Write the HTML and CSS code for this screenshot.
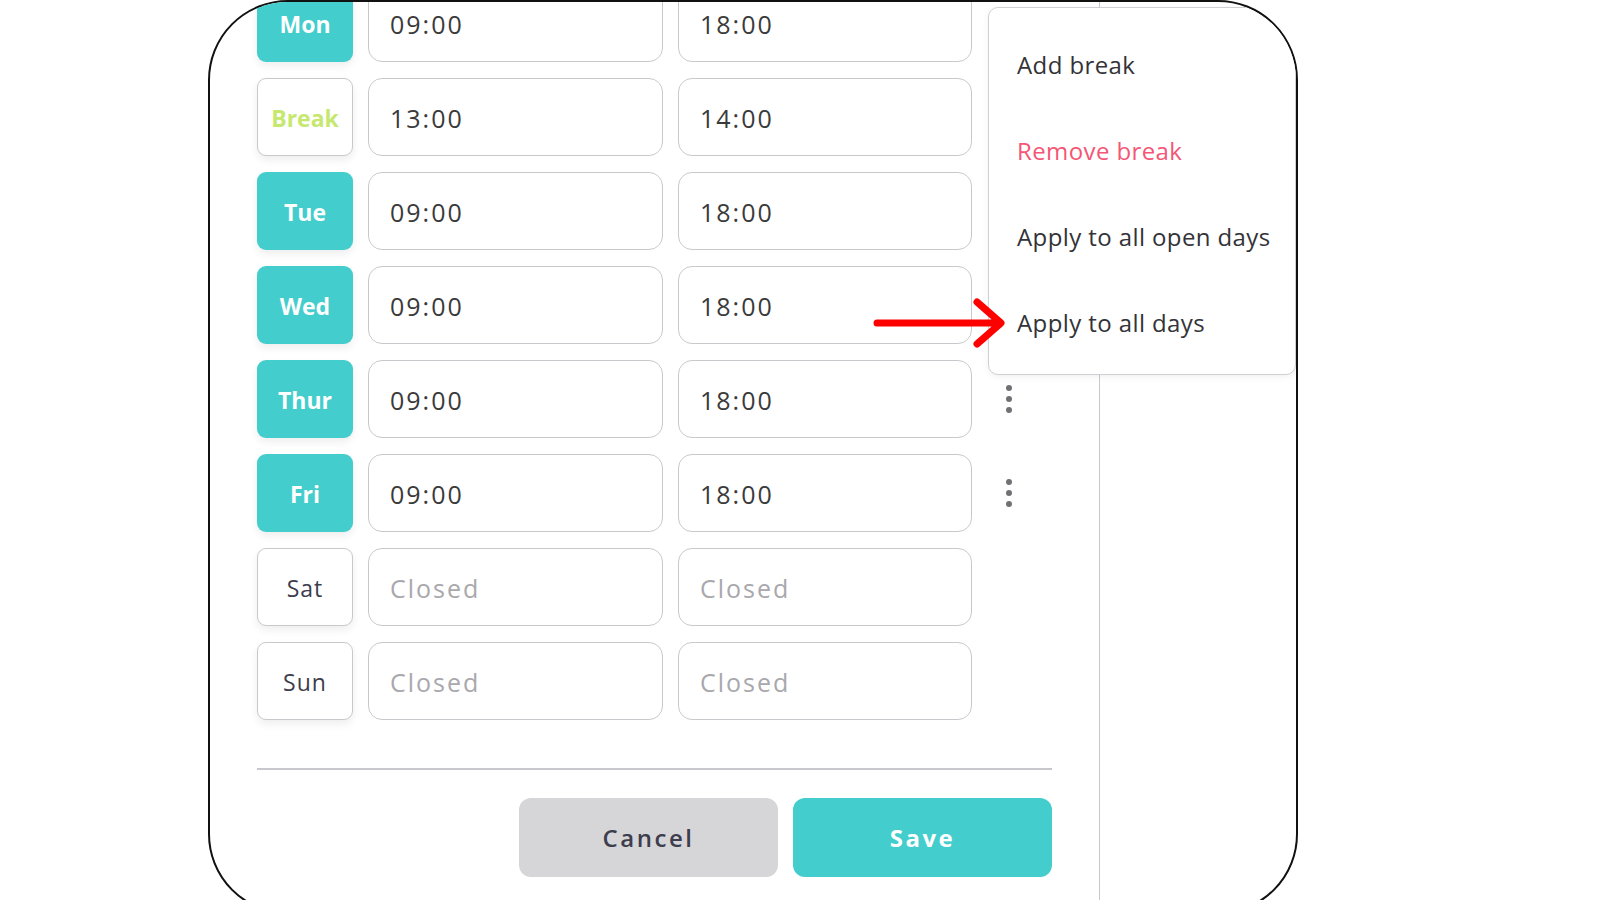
FILE: index.html
```html
<!DOCTYPE html>
<html lang="en">
<head>
<meta charset="utf-8">
<title>Opening hours</title>
<link rel="stylesheet" href="styles.css">
</head>
<body>
<div class="frame">
  <div class="main">
    <div class="rows">
      <div class="row"><div class="day open">Mon</div><div class="field">09:00</div><div class="field">18:00</div><div class="more"></div></div>
      <div class="row"><div class="day brk">Break</div><div class="field">13:00</div><div class="field">14:00</div><div class="more"></div></div>
      <div class="row"><div class="day open">Tue</div><div class="field">09:00</div><div class="field">18:00</div><div class="more"></div></div>
      <div class="row"><div class="day open">Wed</div><div class="field">09:00</div><div class="field">18:00</div><div class="more"></div></div>
      <div class="row"><div class="day open">Thur</div><div class="field">09:00</div><div class="field">18:00</div><div class="more"><span class="dots"><i></i><i></i><i></i></span></div></div>
      <div class="row"><div class="day open">Fri</div><div class="field">09:00</div><div class="field">18:00</div><div class="more"><span class="dots"><i></i><i></i><i></i></span></div></div>
      <div class="row"><div class="day closed">Sat</div><div class="field ph">Closed</div><div class="field ph">Closed</div><div class="more"></div></div>
      <div class="row"><div class="day closed">Sun</div><div class="field ph">Closed</div><div class="field ph">Closed</div><div class="more"></div></div>
    </div>
    <div class="divider"></div>
    <div class="actions">
      <button class="btn cancel">Cancel</button>
      <button class="btn save">Save</button>
    </div>
  </div>
  <div class="side"></div>
  <div class="menu">
    <div class="item">Add break</div>
    <div class="item danger">Remove break</div>
    <div class="item">Apply to all open days</div>
    <div class="item">Apply to all days</div>
  </div>
  <svg class="arrow" width="140" height="60" viewBox="0 0 140 60">
    <path d="M7 28 H129 M107 7 L131 28 L107 49" fill="none" stroke="#ff0000" stroke-width="7" stroke-linecap="round" stroke-linejoin="round"/>
  </svg>
</div>
</body>
</html>
```
FILE: styles.css
```css
* { box-sizing: border-box; }
html, body { margin: 0; padding: 0; background: #ffffff; }
body {
  font-family: "Open Sans", "Noto Sans", "Liberation Sans", sans-serif;
  color: #3a3a3f;
  width: 1600px;
  height: 900px;
  overflow: hidden;
}
.frame {
  position: relative;
  margin-left: 208px;
  width: 1090px;
  height: 914px;
  border: 2px solid #111;
  border-radius: 80px;
  overflow: hidden;
  display: flex;
  background: #fff;
}
.main {
  width: 889px;
  flex: none;
  padding: 0 47px;
}
.side {
  flex: 1;
  border-left: 1px solid #c9c9cd;
}
.rows {
  margin-top: -18px;
  display: flex;
  flex-direction: column;
  gap: 16px;
}
.row {
  display: grid;
  grid-template-columns: 96px 295px 294px 40px;
  column-gap: 15px;
  height: 78px;
}
.day {
  border-radius: 9px;
  display: flex;
  align-items: center;
  justify-content: center;
  font-size: 23px;
  padding-top: 2px;
  box-shadow: 0 4px 8px rgba(0,0,0,0.07);
}
.day.open {
  background: #43cdcc;
  color: #fff;
  font-weight: 700;
}
.day.brk {
  background: #fff;
  border: 1.5px solid #c9c9cd;
  color: #c6e86e;
  font-weight: 700;
}
.day.closed {
  background: #fff;
  border: 1.5px solid #c9c9cd;
  color: #3d3d4d;
  font-weight: 500;
  letter-spacing: 1px;
}
.field {
  border: 1.5px solid #c9c9cd;
  border-radius: 14px;
  display: flex;
  align-items: center;
  padding: 2px 0 0 21px;
  font-size: 25px;
  letter-spacing: 2px;
  color: #3a3a3a;
}
.field.ph { color: #a8a8ad; }
.more {
  display: flex;
  align-items: center;
  justify-content: center;
}
.dots {
  display: flex;
  flex-direction: column;
  gap: 5px;
  margin-left: 4px;
}
.dots i {
  display: block;
  width: 6px;
  height: 6px;
  border-radius: 50%;
  background: #707075;
}
.divider {
  margin-top: 48px;
  height: 2px;
  background: #c8c8cc;
}
.actions {
  margin-top: 28px;
  display: flex;
  justify-content: flex-end;
  gap: 15px;
}
.btn {
  width: 259px;
  height: 79px;
  border: none;
  border-radius: 12px;
  font-family: "Open Sans", "Noto Sans", "Liberation Sans", sans-serif;
  font-size: 24px;
  font-weight: 600;
  letter-spacing: 2.5px;
}
.btn.cancel { background: #d6d6d9; color: #3d3d4d; }
.btn.save { background: #43cdcc; color: #fff; font-weight: 700; }
.menu {
  position: absolute;
  left: 778px;
  top: 5px;
  width: 308px;
  height: 368px;
  background: #fff;
  border: 1.5px solid #d0d0d4;
  border-radius: 10px;
  padding: 13px 0 0 28px;
  box-shadow: 0 2px 6px rgba(0,0,0,0.06);
}
.menu .item {
  height: 86px;
  display: flex;
  align-items: center;
  font-size: 24px;
  letter-spacing: 0.4px;
  color: #333338;
  white-space: nowrap;
}
.menu .item.danger { color: #f45676; }
.arrow {
  position: absolute;
  left: 660px;
  top: 293px;
}
```
